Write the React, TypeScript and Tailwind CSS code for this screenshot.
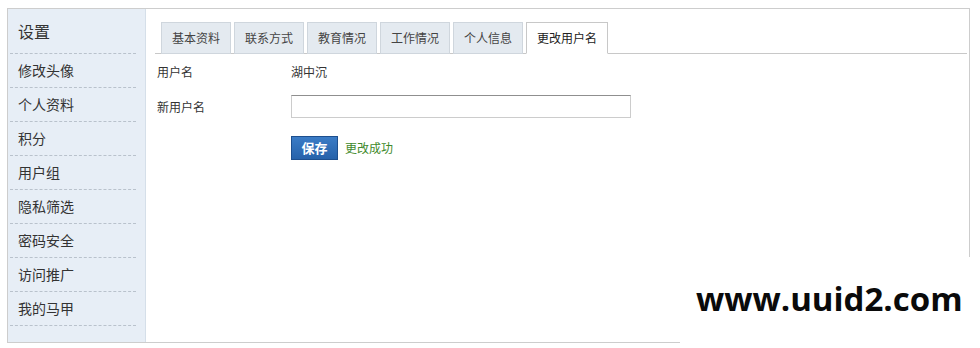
import React from 'react';

const MENU = ['修改头像', '个人资料', '积分', '用户组', '隐私筛选', '密码安全', '访问推广', '我的马甲'];
const TABS = ['基本资料', '联系方式', '教育情况', '工作情况', '个人信息', '更改用户名'];

const FONT = { fontFamily: '"Noto Sans CJK SC", "Noto Sans", sans-serif' };

export default function App() {
  return (
    <div className="relative h-[348px] w-[980px] overflow-hidden bg-white pl-[7px] pt-[8px]" style={FONT}>
      <div className="flex h-[335px] w-[963px] border border-[#cdcdcd]">
        {/* Sidebar */}
        <aside className="w-[138px] shrink-0 border-r border-[#d5dfe9] bg-[#e7eef6] pl-[2px] pr-[9px]">
          <div className="flex h-[45px] items-center border-b border-dashed border-[#b9c2cc] pl-[8px] text-[16px] text-[#333]">
            设置
          </div>
          {MENU.map((item) => (
            <div
              key={item}
              className="flex h-[34px] items-center border-b border-dashed border-[#b9c2cc] pl-[8px] text-[14px] text-[#333]"
            >
              {item}
            </div>
          ))}
        </aside>

        {/* Content */}
        <main className="flex-1 pl-[9px] pr-[2px] pt-[13px]">
          <div className="flex gap-[3px] border-b border-[#c8c8c8] pl-[6px]">
            {TABS.map((tab, i) => {
              const active = i === TABS.length - 1;
              return (
                <div
                  key={tab}
                  className={`-mb-px flex h-[32px] items-center border px-[10px] text-[12px] ${
                    active
                      ? 'border-[#c8c8c8] border-b-white bg-white text-[#222]'
                      : 'border-[#cfd6dd] bg-[#e4eaf0] text-[#444]'
                  }`}
                >
                  {tab}
                </div>
              );
            })}
          </div>

          <div className="grid grid-cols-[134px_1fr] items-center pl-[2px] pt-[7px] text-[12px] text-[#333]">
            <div className="flex h-[22px] items-center">用户名</div>
            <div className="flex h-[22px] items-center">湖中沉</div>

            <div className="mt-[12px] flex h-[22px] items-center">新用户名</div>
            <div className="mt-[12px]">
              <input
                type="text"
                className="block h-[23px] w-[340px] border border-[#cccccc] border-t-[#8f8f8f] bg-white outline-none"
              />
            </div>

            <div className="mt-[18px]" />
            <div className="mt-[18px] flex items-center gap-[7px]">
              <button className="h-[24px] w-[47px] border border-[#1d4f8e] bg-gradient-to-b from-[#3b7cc6] to-[#2662aa] text-[13px] font-bold text-white">
                保存
              </button>
              <span className="-mt-[1px] text-[12px] text-[#3f8a2c]">更改成功</span>
            </div>
          </div>
        </main>
      </div>

      {/* Watermark */}
      <div className="absolute left-[680px] top-[257px] flex h-[91px] w-[300px] items-start bg-white pl-[16px] pt-[25px]">
        <span
          className="text-[33px] font-bold leading-none text-[#0a0a0a]"
          style={{ fontFamily: '"Open Sans", "DejaVu Sans", sans-serif' }}
        >
          www.uuid2.com
        </span>
      </div>
    </div>
  );
}
